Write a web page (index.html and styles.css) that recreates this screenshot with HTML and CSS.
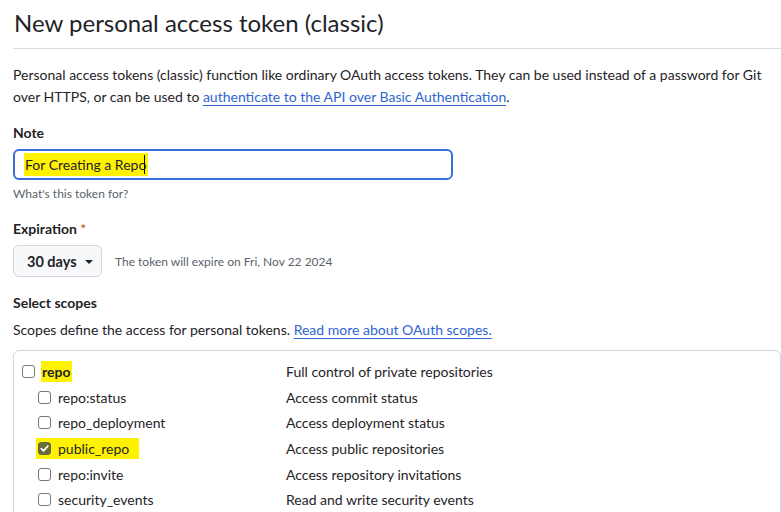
FILE: index.html
```html
<!DOCTYPE html>
<html lang="en">
<head>
<meta charset="utf-8">
<title>New personal access token (classic)</title>
<link rel="stylesheet" href="styles.css">
</head>
<body>
<div class="page">
  <h1 class="title">New personal access token (classic)</h1>
  <p class="intro">Personal access tokens (classic) function like ordinary OAuth access tokens. They can be used instead of a password for Git over HTTPS, or can be used to <a href="#" class="link">authenticate to the API over Basic Authentication</a>.</p>

  <div class="field note-field">
    <div class="label">Note</div>
    <div class="input"><span class="mark">For Creating a Repo</span><span class="caret"></span></div>
    <div class="hint">What's this token for?</div>
  </div>

  <div class="field exp-field">
    <div class="label">Expiration <span class="req">*</span></div>
    <div class="exp-row">
      <div class="btn">30 days <span class="tri"></span></div>
      <span class="exp-note">The token will expire on Fri, Nov 22 2024</span>
    </div>
  </div>

  <div class="field scope-field">
    <div class="label">Select scopes</div>
    <p class="scope-desc">Scopes define the access for personal tokens. <a href="#" class="link">Read more about OAuth scopes.</a></p>
    <div class="scopes">
      <div class="row">
        <div class="name top"><span class="cb"></span><span class="mark mark-repo">repo</span></div>
        <div class="desc">Full control of private repositories</div>
      </div>
      <div class="row">
        <div class="name sub"><span class="cb"></span>repo:status</div>
        <div class="desc">Access commit status</div>
      </div>
      <div class="row">
        <div class="name sub"><span class="cb"></span>repo_deployment</div>
        <div class="desc">Access deployment status</div>
      </div>
      <div class="row">
        <div class="name sub"><span class="mark mark-pub"><span class="cb checked"><svg viewBox="0 0 12 12" width="11" height="11"><path d="M2.5 6.2 L5 8.6 L9.6 3.4" fill="none" stroke="#fff" stroke-width="1.8" stroke-linecap="round" stroke-linejoin="round"/></svg></span>public_repo</span></div>
        <div class="desc">Access public repositories</div>
      </div>
      <div class="row">
        <div class="name sub"><span class="cb"></span>repo:invite</div>
        <div class="desc">Access repository invitations</div>
      </div>
      <div class="row">
        <div class="name sub"><span class="cb"></span>security_events</div>
        <div class="desc">Read and write security events</div>
      </div>
    </div>
  </div>
</div>
</body>
</html>
```

FILE: styles.css
```css
* { box-sizing: border-box; }
html, body {
  margin: 0;
  padding: 0;
  background: #ffffff;
  overflow: hidden;
}
body {
  font-family: Lato, "Liberation Sans", "Noto Sans", sans-serif;
  font-size: 14px;
  color: #1f2328;
  line-height: 21px;
}
.page {
  padding-left: 13px;
  width: 781px;
}
.title {
  margin: 5px 0 0 0;
  font-size: 24px;
  font-weight: 400;
  line-height: 36px;
  padding-bottom: 7px;
  border-bottom: 1px solid #d8dee4;
  padding-left: 1px;
}
.intro {
  margin: 15px 0 0 0;
  line-height: 22px;
}
.link {
  color: #2f66d0;
  text-decoration: underline;
  text-underline-offset: 3px;
}
.field { margin-top: 14px; }
.label {
  font-weight: 700;
  line-height: 21px;
}
.req { color: #bc4c00; font-weight: 400; }
.input {
  margin-top: 6px;
  width: 440px;
  height: 31px;
  border: 2px solid #3a6ed8;
  border-radius: 6px;
  display: flex;
  align-items: center;
  padding-left: 9px;
}
.mark { background: #fff200; }
.input .mark { padding: 1px 2px 1px 1px; }
.caret {
  display: inline-block;
  width: 1px;
  height: 19px;
  background: #000;
  margin-left: -4px;
}
.hint {
  margin-top: 5px;
  font-size: 12px;
  line-height: 18px;
  color: #59636e;
}
.exp-field { margin-top: 15px; }
.exp-row {
  margin-top: 6px;
  display: flex;
  align-items: center;
  gap: 13px;
}
.btn {
  height: 32px;
  width: 89px;
  background: #f6f8fa;
  border: 1px solid #d0d7de;
  border-radius: 6px;
  display: flex;
  align-items: center;
  padding-left: 13px;
  font-weight: 700;
  font-size: 14.5px;
}
.tri {
  display: inline-block;
  width: 0;
  height: 0;
  border-left: 4px solid transparent;
  border-right: 4px solid transparent;
  border-top: 4px solid #1f2328;
  margin-left: 8px;
  margin-top: 1px;
}
.exp-note {
  font-size: 12px;
  color: #59636e;
}
.scope-field { margin-top: 15px; }
.scope-desc { margin: 6px 0 0 0; }
.scopes {
  margin-top: 10px;
  width: 768px;
  height: 200px;
  border: 1px solid #d0d7de;
  border-radius: 6px;
  padding: 8px 8px;
}
.row {
  display: flex;
  height: 25.6px;
  align-items: center;
}
.name {
  width: 264px;
  display: flex;
  align-items: center;
}
.name.top { font-weight: 700; }
.name.sub { padding-left: 16px; }
.desc { color: #1f2328; }
.cb {
  display: inline-block;
  width: 13px;
  height: 13px;
  border: 1px solid #767676;
  border-radius: 3px;
  background: #fff;
  margin-right: 7px;
  flex: none;
}
.mark-repo { padding: 0 1px; margin-left: -1px; }
.mark-pub {
  display: inline-flex;
  align-items: center;
  padding: 0 10px 0 2px;
  margin-left: -2px;
}
.cb.checked {
  background: #6a6a3c;
  border-color: #6a6a3c;
  display: inline-flex;
  align-items: center;
  justify-content: center;
}
.cb.checked svg { display: block; }
```
